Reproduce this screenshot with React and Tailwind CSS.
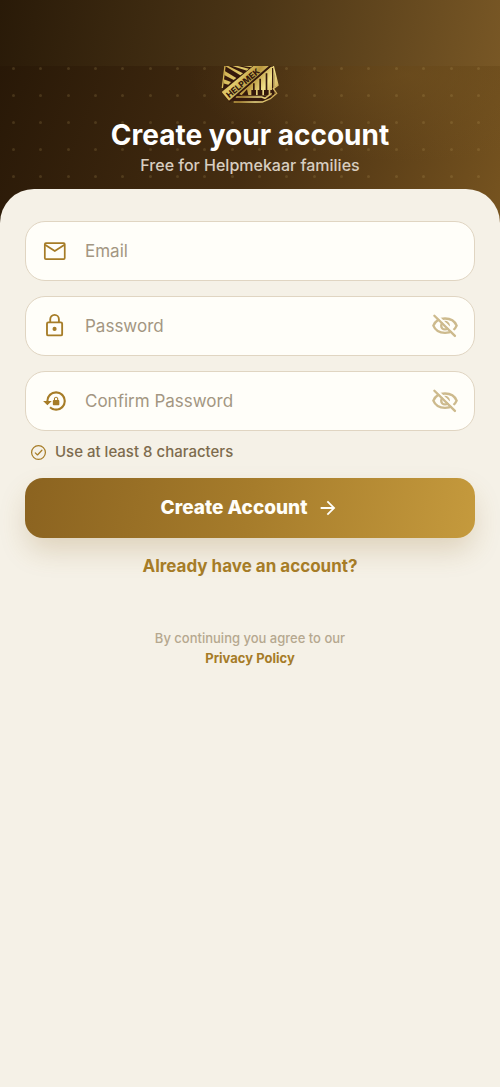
import { MdArrowForward, MdLockReset } from 'react-icons/md';

const DOT_ROWS = 5;
const DOT_COLUMNS = 18;

function DotPattern() {
    return (
        <div className="absolute inset-x-0 top-0 flex flex-col gap-6 pt-px pl-3 pr-5" aria-hidden="true">
            {Array.from({ length: DOT_ROWS }, (_, row) => (
                <div key={row} className="flex justify-between">
                    {Array.from({ length: DOT_COLUMNS }, (_, col) => (
                        <span key={col} className="size-[3px] rounded-full bg-[#c8ab6c]/18" />
                    ))}
                </div>
            ))}
        </div>
    );
}

function MailIcon({ className }) {
    return (
        <svg viewBox="0 0 24 24" className={className} fill="none" stroke="currentColor" strokeWidth="1.6" strokeLinejoin="round" aria-hidden="true">
            <rect x="2.6" y="4.8" width="18.4" height="14.6" rx="1" />
            <path d="M2.8 6.2L11.8 12L20.8 6.2" />
        </svg>
    );
}

function LockIcon({ className }) {
    return (
        <svg viewBox="0 0 24 24" className={className} fill="none" stroke="currentColor" strokeWidth="1.7" aria-hidden="true">
            <rect x="4.6" y="8.7" width="14" height="12" rx="1.2" />
            <path d="M7.6 8.7V5.8a4 4 0 0 1 8 0v2.9" />
            <circle cx="11.6" cy="14.7" r="1.9" fill="currentColor" stroke="none" />
        </svg>
    );
}

function CheckIcon({ className }) {
    return (
        <svg viewBox="0 0 18 18" className={className} fill="none" stroke="currentColor" strokeWidth="1.3" strokeLinecap="round" strokeLinejoin="round" aria-hidden="true">
            <circle cx="9" cy="9" r="7.3" />
            <path d="M5.6 9.4L7.9 11.6L12.6 6.6" />
        </svg>
    );
}

function EyeOffIcon({ className }) {
    return (
        <svg viewBox="24 14 76 68" className={className} fill="none" stroke="currentColor" strokeWidth="7" strokeLinecap="round" aria-hidden="true">
            <path d="M28 47C34 32 47 26 62 26S90 32 96 47C90 62 77 68 62 68S34 62 28 47Z" />
            <circle cx="62" cy="47" r="11" />
            <path d="M39 18L97 74" stroke="#fffef9" strokeLinecap="butt" />
            <path d="M31 18L91 77" />
        </svg>
    );
}

function Logo() {
    return (
        <svg viewBox="0 0 174 111" className="relative block w-[58px] h-[37px]" role="img" aria-label="Helpmekaar">
            <defs>
                <linearGradient id="gold" gradientUnits="userSpaceOnUse" x1="0" y1="0" x2="174" y2="111">
                    <stop offset="0" stopColor="#cda847" />
                    <stop offset="0.3" stopColor="#e0ca6c" />
                    <stop offset="0.5" stopColor="#b9953c" />
                    <stop offset="0.7" stopColor="#f3e28c" />
                    <stop offset="1" stopColor="#b58a38" />
                </linearGradient>
                <clipPath id="shield">
                    <path d="M12 0H157L171 58L157 68L167 82L148 98L124 109H40L6 78Z" />
                </clipPath>
            </defs>
            <g clipPath="url(#shield)">
                <path d="M0 0H174V111H0Z" fill="#35190c" />
                <g fill="url(#gold)">
                    <path d="M12 0H22L66 22L58 28Z" />
                    <path d="M34 0H50L84 8L78 14Z" />
                    <path d="M66 0H96L90 4Z" />
                    <path d="M10 14L46 36L38 42L8 26Z" />
                    <path d="M8 40L30 48L22 56L6 52Z" />
                    <path d="M160 4L171 58L160 64V10Z" />
                </g>
                <path d="M150 2H158L162 88H62L54 84Z" fill="url(#gold)" />
                <g fill="#35190c">
                    <path d="M96 52H101V72H105V88H91V72H96Z" />
                    <path d="M115 38H120V72H124V88H110V72H115Z" />
                    <path d="M134 22H139V72H143V88H129V72H134Z" />
                    <path d="M153 6H157V72H161V88H148V72H153Z" />
                    <path d="M62 88L78 70L82 88Z" />
                </g>
                <path d="M44 93H122L132 97L152 82" fill="none" stroke="url(#gold)" strokeWidth="5" />
            </g>
            <path
                d="M12 0L4 66M157 0L171 58L157 68L167 82L148 98L124 108H38"
                fill="none"
                stroke="url(#gold)"
                strokeWidth="4"
            />
            <path d="M0 78L100 -4H156L26 109Z" fill="#35190c" />
            <path d="M2 78L102 -4H148L24 104Z" fill="url(#gold)" />
            <text
                transform="translate(25 97) rotate(-40)"
                className="fill-[#35190c] font-['Inter',sans-serif] text-[25px] font-extrabold"
            >
                HELPMEK
            </text>
        </svg>
    );
}

function Field({ id, type, label, icon: Icon, secret }) {
    return (
        <div className="flex items-center h-[60px] px-4 rounded-[20px] border border-[#e0d5c2] bg-[#fffef9]">
            <label htmlFor={id} className="shrink-0">
                <Icon className="size-[26px] text-[#a67c27]" />
            </label>
            <input
                id={id}
                type={type}
                aria-label={label}
                placeholder={label}
                className="flex-1 min-w-0 h-full pl-[17px] text-[17px] text-[#3a2a10] placeholder:text-[#a39682] outline-none"
            />
            {secret && (
                <button type="button" aria-label={`Show ${label}`}>
                    <EyeOffIcon className="size-[26px] text-[#cdba8d]" />
                </button>
            )}
        </div>
    );
}

export default function App() {
    return (
        <div className="min-h-screen bg-[#f5f1e7] font-['Inter',sans-serif]">
            <div className="h-[66px] bg-[linear-gradient(100deg,#291a08_0%,#4b3516_50%,#785725_100%)]" />
            <header className="relative h-[170px] overflow-hidden bg-[radial-gradient(ellipse_at_82%_5%,#76552180_0%,#76552100_38%),linear-gradient(110deg,#281807_0%,#452d11_50%,#785520_100%)]">
                <DotPattern />
                <div className="relative flex flex-col items-center">
                    <Logo />
                    <h1 className="mt-4 text-[28px] leading-8 font-bold text-white">Create your account</h1>
                    <p className="mt-1 text-[16px] leading-5 font-medium text-[#d8cec0]">Free for Helpmekaar families</p>
                </div>
            </header>

            <main className="relative -mt-[47px] px-[25px] pt-8 rounded-t-[34px] bg-[#f5f1e7]">
                <form onSubmit={(e) => e.preventDefault()}>
                    <div className="flex flex-col gap-[15px]">
                        <Field id="email" type="email" label="Email" icon={MailIcon} />
                        <Field id="password" type="password" label="Password" icon={LockIcon} secret />
                        <Field id="confirm" type="password" label="Confirm Password" icon={MdLockReset} secret />
                    </div>
                    <p className="flex items-center gap-2 mt-[11px] pl-[5px] text-[15px] leading-5 font-medium text-[#7d6b4d]">
                        <CheckIcon className="size-[17px] text-[#a67c27]" />
                        Use at least 8 characters
                    </p>
                    <button
                        type="submit"
                        className="flex items-center justify-center gap-[10px] w-full h-[60px] mt-4 rounded-[18px] bg-[linear-gradient(100deg,#8b6320,#a67c2b_50%,#c59a3d)] text-[19px] font-extrabold text-[#fffef9] shadow-[0_14px_28px_-2px_#8b632038]"
                    >
                        Create Account
                        <MdArrowForward className="size-[22px]" />
                    </button>
                </form>
                <div className="mt-4 text-center">
                    <a href="#login" className="text-[17px] leading-6 font-bold text-[#a67c27]">Already have an account?</a>
                </div>
                <p className="mt-[50px] text-center text-[13px] leading-5 font-medium text-[#b5a88f]">
                    By continuing you agree to our
                    <a href="#privacy" className="block font-bold text-[#a67c27]">Privacy Policy</a>
                </p>
            </main>
        </div>
    );
}
